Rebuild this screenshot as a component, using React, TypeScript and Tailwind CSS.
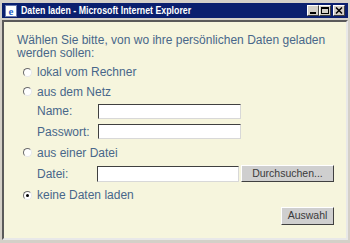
const textFont = "font-['Liberation_Sans',Arial,sans-serif]";

function Radio({ checked = false }: { checked?: boolean }) {
  return (
    <span className="relative flex h-[9px] w-[9px] items-center justify-center rounded-full border border-t-[#6b6b6b] border-l-[#6b6b6b] border-r-[#e8e8e8] border-b-[#e8e8e8] bg-white">
      {checked && <span className="h-[3px] w-[3px] rounded-full bg-black" />}
    </span>
  );
}

function Field({ className = "" }: { className?: string }) {
  return (
    <div
      className={
        "h-[15px] w-[143px] border border-t-[#404040] border-l-[#404040] border-r-[#d8d8d8] border-b-[#d8d8d8] bg-white " +
        className
      }
    />
  );
}

function WinButton({ label, className = "" }: { label: string; className?: string }) {
  return (
    <button
      className={
        "flex items-center justify-center border border-t-white border-l-white border-r-[#404040] border-b-[#404040] bg-[#cfcfcf] text-[10.5px] text-[#3a3a3a] " +
        textFont +
        " " +
        className
      }
    >
      {label}
    </button>
  );
}

function TitleIcon() {
  return (
    <svg width="14" height="14" viewBox="0 0 14 14">
      <rect x="1.5" y="1.5" width="11" height="11" fill="#ffffff" stroke="#6a7ab0" />
      <text x="7" y="11" textAnchor="middle" fontSize="11" fontWeight="bold" fill="#2a62c8" fontFamily="Liberation Serif, serif">
        e
      </text>
    </svg>
  );
}

function CaptionButton({ children, className = "" }: { children: React.ReactNode; className?: string }) {
  return (
    <div
      className={
        "flex h-[11px] w-[12px] items-center justify-center border border-t-white border-l-white border-r-[#404040] border-b-[#404040] bg-[#d4d0c8] " +
        className
      }
    >
      {children}
    </div>
  );
}

export default function App() {
  return (
    <div className="h-[243px] w-[350px] overflow-hidden bg-[#d4d0c8]">
      <div className="flex h-full flex-col px-[2px] pt-[3px] pb-[3px]">
        {/* title bar */}
        <div className="flex h-[15px] items-center bg-[#0a1f6e] pl-[2px] pr-[3px]">
          <TitleIcon />
          <span
            className={
              "ml-[3px] origin-left scale-x-[0.8] whitespace-nowrap text-[11px] font-bold text-white " + textFont
            }
          >
            Daten laden - Microsoft Internet Explorer
          </span>
          <div className="ml-auto flex items-center">
            <CaptionButton>
              <span className="mt-[5px] h-[2px] w-[6px] bg-black" />
            </CaptionButton>
            <CaptionButton>
              <span className="h-[7px] w-[8px] border border-t-2 border-black" />
            </CaptionButton>
            <CaptionButton className="ml-[2px]">
              <svg width="8" height="7" viewBox="0 0 8 7">
                <path d="M1 0.5 L7 6.5 M7 0.5 L1 6.5" stroke="#000" strokeWidth="1.5" />
              </svg>
            </CaptionButton>
          </div>
        </div>

        {/* client area */}
        <div
          className={
            "mt-[2px] flex flex-1 flex-col border-2 border-t-[#5a5a5a] border-l-[#5a5a5a] border-r-[#e8e8e8] border-b-[#e8e8e8] bg-[#f6f5dd] pl-[13px] pr-[12px] pt-[12px] text-[12px] text-[#48678a] " +
            textFont
          }
        >
          <p className="leading-[13px]">
            Wählen Sie bitte, von wo ihre persönlichen Daten geladen
            <br />
            werden sollen:
          </p>

          <div className="mt-[2px] flex h-[20px] items-center pl-[6px]">
            <Radio />
            <span className="ml-[5px]">lokal vom Rechner</span>
          </div>
          <div className="flex h-[19px] items-center pl-[6px]">
            <Radio />
            <span className="ml-[5px]">aus dem Netz</span>
          </div>
          <div className="flex h-[20px] items-center pl-[20px]">
            <span className="w-[61px]">Name:</span>
            <Field />
          </div>
          <div className="flex h-[21px] items-center pl-[20px]">
            <span className="w-[61px]">Passwort:</span>
            <Field />
          </div>
          <div className="flex h-[21px] items-center pl-[6px]">
            <Radio />
            <span className="ml-[5px]">aus einer Datei</span>
          </div>
          <div className="flex h-[21px] items-center pl-[20px]">
            <span className="w-[61px]">Datei:</span>
            <Field className="h-[16px]" />
            <WinButton label="Durchsuchen..." className="ml-[2px] h-[17px] w-[94px]" />
          </div>
          <div className="flex h-[22px] items-center pl-[6px]">
            <Radio checked />
            <span className="ml-[5px]">keine Daten laden</span>
          </div>
          <div className="mt-[1px] flex justify-end">
            <WinButton label="Auswahl" className="h-[18px] w-[53px]" />
          </div>
        </div>
      </div>
    </div>
  );
}
